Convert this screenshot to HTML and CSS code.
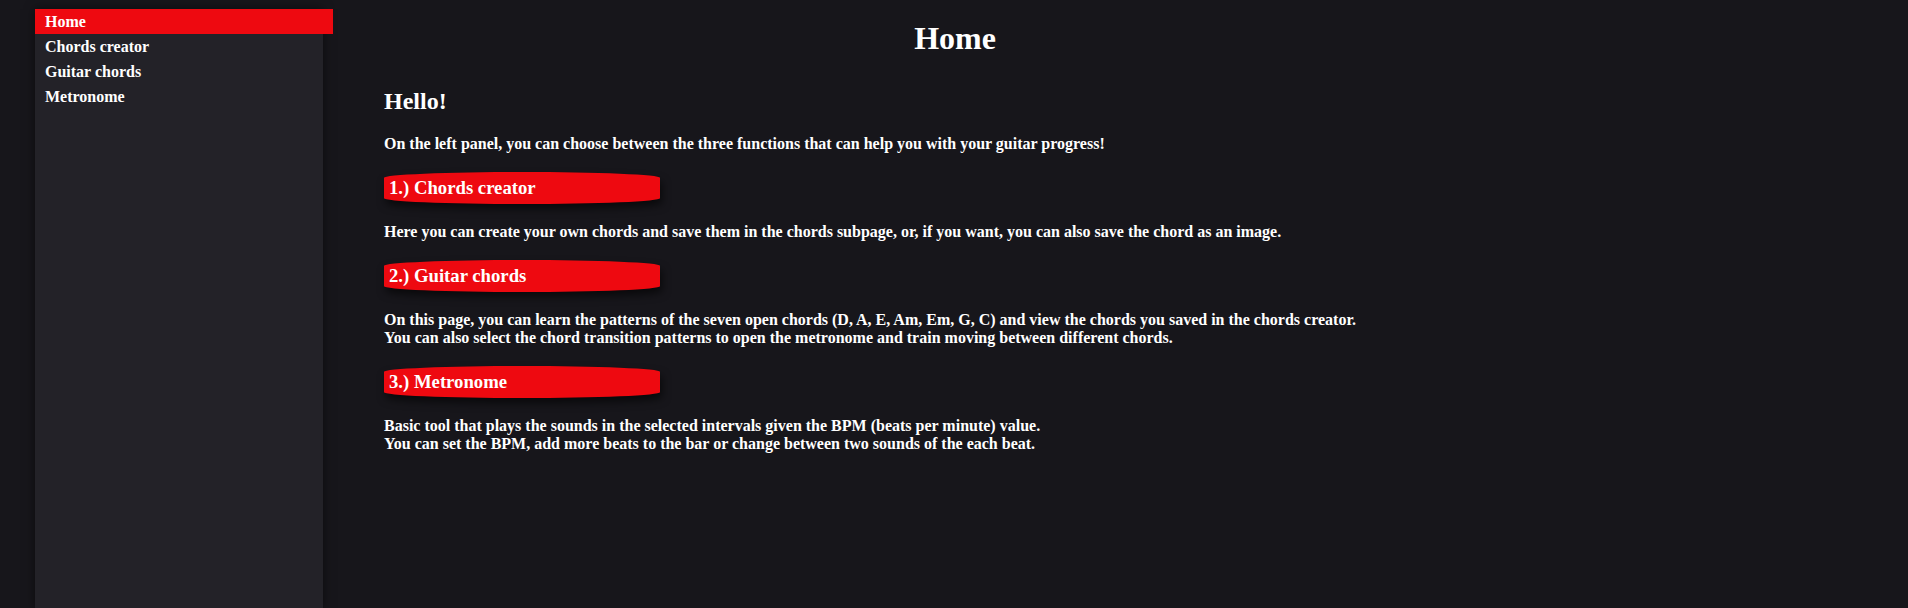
FILE: index.html
```html
<!DOCTYPE html>
<html lang="en">
<head>
<meta charset="utf-8">
<title>Home</title>
<link rel="stylesheet" href="styles.css">
</head>
<body>
<div class="layout">
  <nav class="sidebar">
    <ul class="nav-list">
      <li><a class="nav-link active" href="#">Home</a></li>
      <li><a class="nav-link" href="#">Chords creator</a></li>
      <li><a class="nav-link" href="#">Guitar chords</a></li>
      <li><a class="nav-link" href="#">Metronome</a></li>
    </ul>
  </nav>
  <main class="main">
    <h1 class="page-title">Home</h1>
    <h2 class="greeting">Hello!</h2>
    <p class="text">On the left panel, you can choose between the three functions that can help you with your guitar progress!</p>
    <h3 class="pill">1.) Chords creator</h3>
    <p class="text">Here you can create your own chords and save them in the chords subpage, or, if you want, you can also save the chord as an image.</p>
    <h3 class="pill">2.) Guitar chords</h3>
    <p class="text">On this page, you can learn the patterns of the seven open chords (D, A, E, Am, Em, G, C) and view the chords you saved in the chords creator.<br>You can also select the chord transition patterns to open the metronome and train moving between different chords.</p>
    <h3 class="pill">3.) Metronome</h3>
    <p class="text">Basic tool that plays the sounds in the selected intervals given the BPM (beats per minute) value.<br>You can set the BPM, add more beats to the bar or change between two sounds of the each beat.</p>
  </main>
</div>
</body>
</html>
```

FILE: styles.css
```css
html, body {
  margin: 0;
  padding: 0;
  height: 100%;
}

body {
  background: #17161b;
  color: #ffffff;
  font-family: "Liberation Serif", "Times New Roman", serif;
  font-weight: bold;
  overflow: hidden;
}

.layout {
  display: grid;
  grid-template-columns: 35px 288px 1fr;
  min-height: 100vh;
}

.sidebar {
  grid-column: 2;
  margin-top: 9px;
  background: #232228;
  box-shadow: 0 0 10px rgba(0, 0, 0, 0.55);
  min-height: calc(100vh - 9px);
}

.nav-list {
  list-style: none;
  margin: 0;
  padding: 0;
}

.nav-link {
  display: block;
  width: 100%;
  padding: 3px 0 3px 10px;
  color: #ffffff;
  text-decoration: none;
  font-size: 16px;
  line-height: 19px;
}

.nav-link.active {
  background: #ee0910;
}

.main {
  grid-column: 3;
  padding: 20px 382px 0 61px;
}

.page-title {
  margin: 0 0 31px;
  font-size: 32px;
  text-align: center;
}

.greeting {
  margin: 0 0 20px;
  font-size: 24px;
}

.text {
  margin: 0 0 19px;
  font-size: 16px;
}

.pill {
  box-sizing: border-box;
  width: 276px;
  margin: 0 0 19px;
  padding: 5px 5px;
  font-size: 18.72px;
  background: #ee0910;
  border-radius: 50% / 18%;
  box-shadow: 2px 5px 8px rgba(0, 0, 0, 0.6);
}
```
